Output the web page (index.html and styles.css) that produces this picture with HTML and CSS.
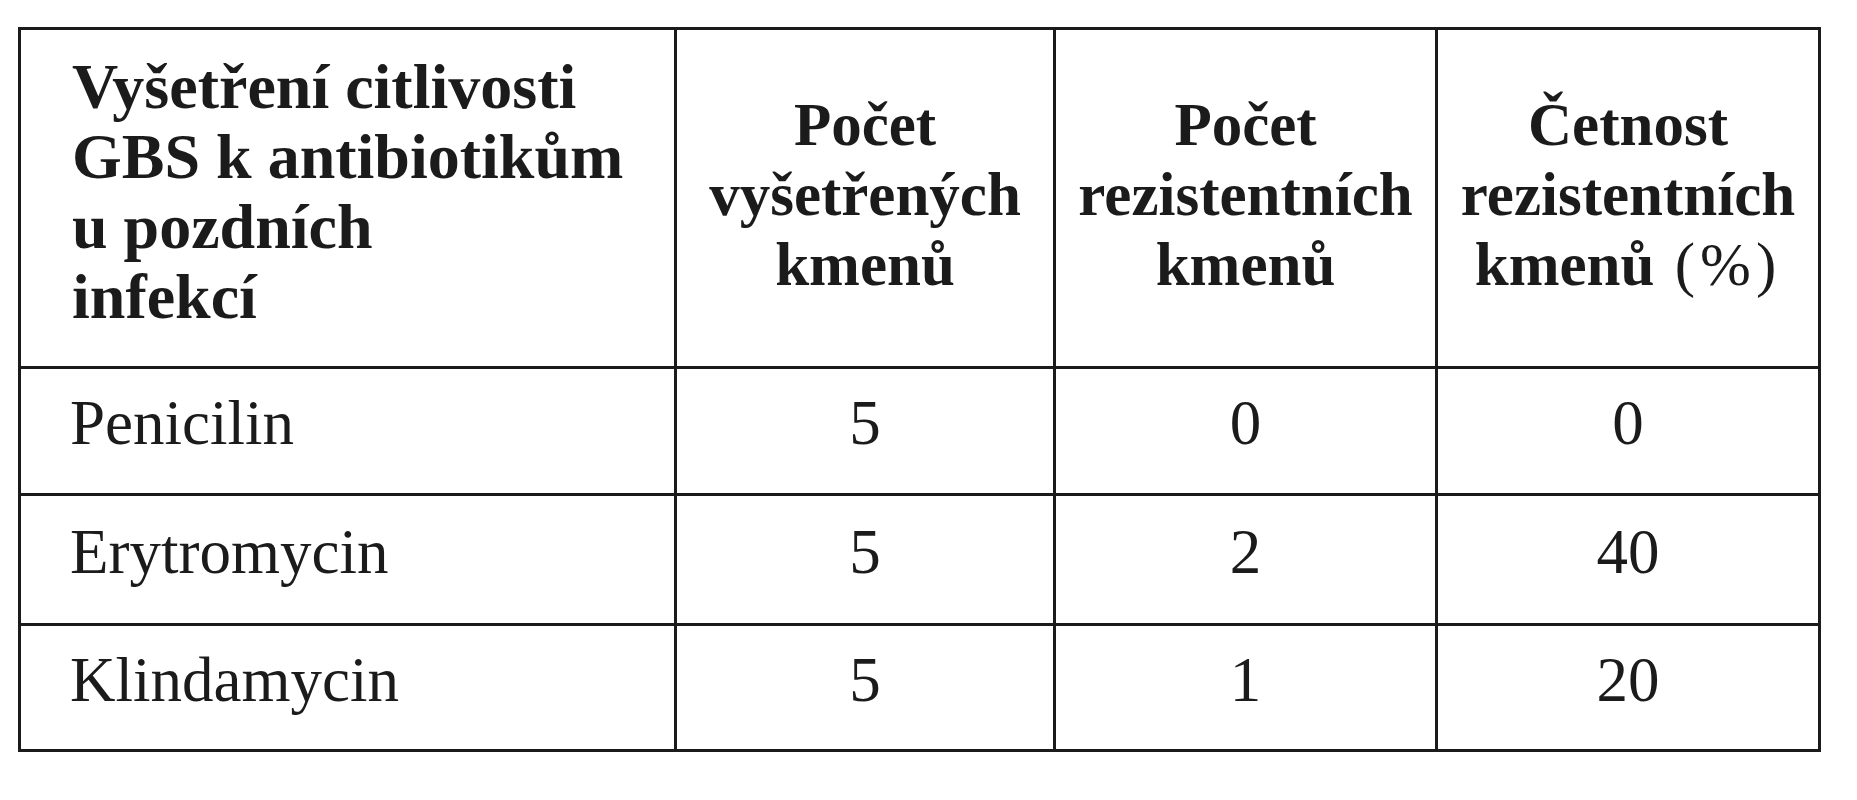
FILE: index.html
```html
<!DOCTYPE html>
<html lang="cs">
<head>
<meta charset="utf-8">
<title>Vyšetření citlivosti GBS</title>
<link rel="stylesheet" href="styles.css">
</head>
<body>
<table class="grid">
  <colgroup>
    <col class="c1">
    <col class="c2">
    <col class="c3">
    <col class="c4">
  </colgroup>
  <thead>
    <tr class="head">
      <th class="first">Vyšetření citlivosti<br>GBS k antibiotikům<br>u pozdních<br>infekcí</th>
      <th>Počet<br>vyšetřených<br>kmenů</th>
      <th>Počet<br>rezistentních<br>kmenů</th>
      <th>Četnost<br>rezistentních<br>kmenů <span class="paren">(</span><span class="pct">%</span><span class="paren">)</span></th>
    </tr>
  </thead>
  <tbody>
    <tr class="r1">
      <td class="name">Penicilin</td>
      <td>5</td>
      <td>0</td>
      <td>0</td>
    </tr>
    <tr class="r2">
      <td class="name">Erytromycin</td>
      <td>5</td>
      <td>2</td>
      <td>40</td>
    </tr>
    <tr class="r3">
      <td class="name">Klindamycin</td>
      <td>5</td>
      <td>1</td>
      <td>20</td>
    </tr>
  </tbody>
</table>
</body>
</html>
```
FILE: styles.css
```css
html, body {
  margin: 0;
  padding: 0;
  background: #ffffff;
}
body {
  padding: 27px 0 0 18px;
  font-family: "Liberation Serif", "Times New Roman", serif;
  color: #1b1b1b;
}
.grid {
  border-collapse: collapse;
  table-layout: fixed;
  width: 1803px;
}
.c1 { width: 656px; }
.c2 { width: 379px; }
.c3 { width: 382px; }
.c4 { width: 383px; }

.grid th,
.grid td {
  border: 3px solid #1b1b1b;
  padding: 0;
  vertical-align: middle;
  text-align: center;
}
.grid th {
  font-weight: bold;
  font-size: 61px;
  line-height: 70px;
  padding-bottom: 6px;
}
.grid th.first {
  text-align: left;
  font-size: 64px;
  line-height: 70px;
  padding-left: 51px;
  padding-bottom: 12px;
}
.paren {
  font-weight: normal;
  padding: 0 5px;
}
.pct {
  font-weight: normal;
}
.head { height: 339px; }
.r1 { height: 127px; }
.r2 { height: 130px; }
.r3 { height: 126px; }

.grid td {
  font-size: 63px;
  line-height: 72px;
  padding-bottom: 16px;
}
.grid td.name {
  text-align: left;
  padding-left: 49px;
}
```
